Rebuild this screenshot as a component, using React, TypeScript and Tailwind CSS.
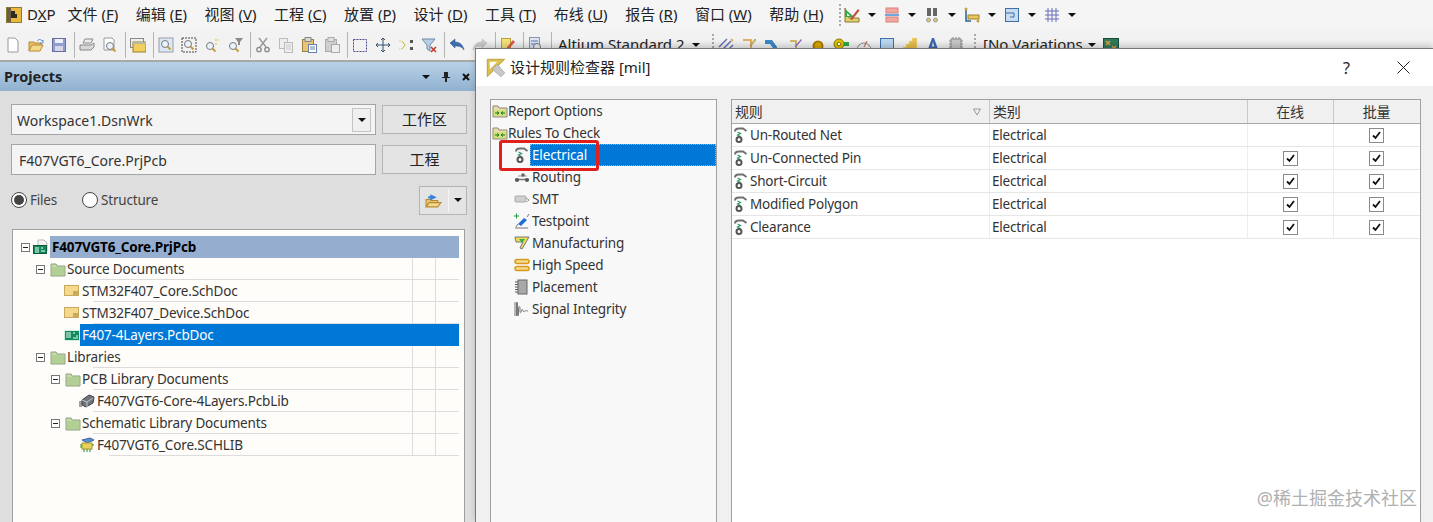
import { FC, ReactNode } from "react";

const Svg: FC<{ children: ReactNode; className?: string; size?: number }> = ({
  children,
  className,
  size = 16,
}) => (
  <svg width={size} height={size} viewBox="0 0 16 16" fill="none" className={`shrink-0 ${className ?? ""}`}>
    {children}
  </svg>
);

const Arrow = () => (
  <svg width="8" height="4" viewBox="0 0 8 4" className="shrink-0">
    <path d="M0 0h8L4 4z" fill="#111" />
  </svg>
);

const Logo = () => (
  <Svg>
    <rect x="0.5" y="0.5" width="15" height="15" fill="#e8b93c" stroke="#8a7a3a" />
    <rect x="1" y="1" width="4" height="14" fill="#6b5f40" />
    <path d="M5 4h4v3h2v4H5z" fill="#2f2a22" />
  </Svg>
);

const FolderGreen = () => (
  <Svg>
    <path d="M1 5V3h5l1 2h8v10H1z" fill="#c4dca8" stroke="#8e9f7e" />
    <rect x="2" y="6" width="12" height="8" fill="#b2d096" />
  </Svg>
);

const SchDoc = () => (
  <Svg>
    <rect x="0.5" y="2.5" width="14" height="10" fill="#f5d98a" stroke="#c9a862" />
    <path d="M9 9h5M9 11h5" stroke="#a07d2c" />
  </Svg>
);

const PcbIcon: FC<{ light?: boolean }> = ({ light }) => (
  <Svg>
    <rect x="0.5" y="3.5" width="15" height="10" fill="#128a5a" stroke={light ? "#d6f0e4" : "#0a5a3a"} />
    <path d="M2 6h5M2 8h5M2 10h5M9 6h2M12 9h2M9 11h5" stroke="#e8fff2" />
  </Svg>
);

const ProjectIcon = () => (
  <Svg>
    <path d="M5 1h6l3 3v8H5z" fill="#f4f4f4" stroke="#b8b8b8" />
    <rect x="0.5" y="6.5" width="13" height="8" fill="#128a5a" stroke="#0a5a3a" />
    <path d="M2 9h4M2 11h4M2 13h4M8 9h2M8 12h4" stroke="#e8fff2" />
  </Svg>
);

const ChipLib = () => (
  <Svg>
    <path d="M3 7l7-5 5 2-1 6-7 4-4-2z" fill="#70757c" stroke="#3d4046" />
    <path d="M3 7l5 2v5M8 9l6-4" stroke="#c0c4ca" />
    <path d="M0 9h3M0 11h3M0 13h3" stroke="#444" />
  </Svg>
);

const SchLib = () => (
  <Svg>
    <path d="M3 3l8-2 4 2-7 3z" fill="#5b8fd0" stroke="#3b67a0" />
    <rect x="3" y="6" width="10" height="6" fill="#e8d25a" stroke="#a89430" />
    <path d="M1 8h2M1 10h2M13 8h2M5 12v3M8 12v3M11 12v3" stroke="#2a8a2a" />
  </Svg>
);

const GroupFolder = () => (
  <Svg>
    <path d="M1 5V3h5l1 2h8v9H1z" fill="#e8dcae" stroke="#8f8a70" />
    <rect x="2" y="7" width="12" height="6" fill="#cfe27c" />
    <path d="M3 10h4M5 8.500L7 10l-2 1.500M13 10H9M11 8.500L9 10l2 1.500" stroke="#1d7a1d" />
  </Svg>
);

const RuleIcon = () => (
  <Svg>
    <path d="M2 4.500C2 2.500 3.500 1.500 6 1.500h4l3.500 2.500" stroke="#6f6f6f" strokeWidth="2" />
    <path d="M4.500 5l3 1.500-3 1.500 3 1.500" stroke="#2f9a6a" strokeWidth="1.200" />
    <circle cx="6" cy="12.500" r="2.500" fill="#fff" stroke="#555" strokeWidth="2" />
  </Svg>
);

const RoutingIcon = () => (
  <Svg>
    <path d="M1 10.500h14" stroke="#777" strokeWidth="1.500" />
    <path d="M4 7h9" stroke="#999" />
    <circle cx="3" cy="11" r="2" fill="#555" />
    <circle cx="13" cy="11" r="2" fill="#555" />
    <circle cx="9" cy="6" r="1.800" fill="#666" />
  </Svg>
);

const SmtIcon = () => (
  <Svg>
    <rect x="1" y="5" width="11" height="6" rx="1" fill="#cfcfcf" stroke="#aaa" />
    <path d="M12 7l3 2-2 2" stroke="#999" />
  </Svg>
);

const TestpointIcon = () => (
  <Svg>
    <path d="M0 3h5M2.500 0.500v5" stroke="#1c9a3a" />
    <path d="M4 11l6-6 3 2-6 6z" fill="#1e6fd0" />
    <path d="M13 4l2-3M1 15h13M4 11l-2 3" stroke="#777" />
  </Svg>
);

const MfgIcon = () => (
  <Svg>
    <path d="M1 2h14L8 14l-2-1 3-6H2z" fill="#f1da54" stroke="#777" />
    <path d="M5 4h6L8 8z" fill="#2fb35a" />
  </Svg>
);

const SpeedIcon = () => (
  <Svg>
    <rect x="1" y="2.500" width="14" height="4" rx="2" fill="#f5d98a" stroke="#d69a1c" strokeWidth="1.500" />
    <rect x="1" y="9.500" width="14" height="4" rx="2" fill="#f5d98a" stroke="#d69a1c" strokeWidth="1.500" />
  </Svg>
);

const PlaceIcon = () => (
  <Svg>
    <rect x="4" y="1" width="9" height="14" fill="#a8a8a8" stroke="#666" />
    <path d="M1 3h3M1 5.500h3M1 8h3M1 10.500h3M1 13h3" stroke="#555" />
  </Svg>
);

const SignalIcon = () => (
  <Svg>
    <path d="M1 15V1M2.500 15V2c0-1 1-1 1 0v12c0 1 1 1 1 0V7c0-2 1.500-2 1.500 0v4c0 1 1 1 1.500-1s1-2 1.500-.5 1 1.500 2 .5 2 0 3 0" stroke="#777" />
  </Svg>
);

const Magnifier = ({ cx = 9, cy = 8 }: { cx?: number; cy?: number }) => (
  <>
    <circle cx={cx} cy={cy} r="3.500" fill="#eaf3fb" stroke="#777" />
    <path d={`M${cx + 2.5} ${cy + 2.5}l3 3`} stroke="#c79a3c" strokeWidth="2" />
  </>
);

const tools: Record<string, ReactNode> = {
  newDoc: <path d="M3 1h7l3 3v11H3z" fill="#fff" stroke="#9a9a9a" />,
  open: (
    <>
      <path d="M1 14V5h5l1 1h6v2" fill="#e9c26a" stroke="#b58a32" />
      <path d="M1 14l3-6h11l-3 6z" fill="#f5d98a" stroke="#b58a32" />
      <path d="M9 4c2-2 4-2 5 0l1-1v3h-3" stroke="#5a8fd0" />
    </>
  ),
  save: (
    <>
      <rect x="1.500" y="1.500" width="13" height="13" fill="#8f9fd0" stroke="#6a6f9a" />
      <rect x="4" y="2" width="8" height="4" fill="#eef" />
      <rect x="4" y="9" width="8" height="5" fill="#d6d6e6" />
    </>
  ),
  print: (
    <>
      <path d="M4 6l2-4h8l-2 4z" fill="#eee" stroke="#888" />
      <path d="M1 8h11l3-2v4l-3 3H1z" fill="#d8d8d8" stroke="#888" />
    </>
  ),
  preview: (
    <>
      <path d="M2 1h8l2 2v10H2z" fill="#fff" stroke="#999" />
      <Magnifier cx={8} cy={9} />
    </>
  ),
  windowY: (
    <>
      <rect x="0.500" y="1.500" width="13" height="9" fill="#eee" stroke="#888" />
      <rect x="3" y="5" width="13" height="10" fill="#f2cf5c" stroke="#9a8030" />
      <rect x="3" y="5" width="13" height="2" fill="#b8b8a0" />
    </>
  ),
  zoomDoc: (
    <>
      <rect x="1" y="1" width="14" height="14" fill="#dbe8f5" stroke="#9a9aa6" />
      <Magnifier cx={7} cy={7} />
    </>
  ),
  zoomArea: (
    <>
      <rect x="1" y="1" width="14" height="14" stroke="#444" strokeDasharray="2 1" />
      <Magnifier cx={7} cy={7} />
    </>
  ),
  zoomSel: (
    <>
      <Magnifier cx={6} cy={9} />
      <path d="M11 3h4M11 7h3" stroke="#c7c04c" strokeDasharray="2 1" />
    </>
  ),
  zoomFilter: (
    <>
      <Magnifier cx={6} cy={9} />
      <path d="M8 1h8l-3 4v3h-2V5z" fill="#8a8a8a" />
    </>
  ),
  cut: (
    <>
      <path d="M4 1l7 9M12 1L5 10" stroke="#999" strokeWidth="1.400" />
      <circle cx="4" cy="12.500" r="2.200" stroke="#888" strokeWidth="1.300" />
      <circle cx="12" cy="12.500" r="2.200" stroke="#888" strokeWidth="1.300" />
    </>
  ),
  copy: (
    <>
      <rect x="1.500" y="1.500" width="8" height="10" fill="#eee" stroke="#bbb" />
      <rect x="6.500" y="5.500" width="8" height="10" fill="#eee" stroke="#bbb" />
      <path d="M8 8h5M8 10h5M8 12h5" stroke="#ccc" />
    </>
  ),
  paste: (
    <>
      <rect x="1.500" y="2.500" width="11" height="12" fill="#e7c574" stroke="#9a8040" />
      <rect x="4" y="0.500" width="6" height="4" fill="#d8d8d8" stroke="#888" />
      <rect x="7.500" y="7.500" width="8" height="8" fill="#fff" stroke="#6a7fb0" />
      <path d="M9 10h5M9 12h5" stroke="#6a7fb0" />
    </>
  ),
  pasteGray: (
    <>
      <rect x="1.500" y="2.500" width="11" height="12" fill="#cfcfcf" stroke="#aaa" />
      <rect x="4" y="0.500" width="6" height="4" fill="#e2e2e2" stroke="#aaa" />
      <rect x="7.500" y="7.500" width="8" height="8" fill="#eee" stroke="#aaa" />
    </>
  ),
  select: <rect x="1.500" y="2.500" width="13" height="12" stroke="#4a4a8a" strokeDasharray="2 1" />,
  move: (
    <path d="M8 1v14M1 8h14M8 1L6 3M8 1l2 2M8 15l-2-2M8 15l2-2M1 8l2-2M1 8l2 2M15 8l-2-2M15 8l-2 2" stroke="#33506e" />
  ),
  dragSel: (
    <>
      <path d="M1 4h3l3 4-3 4H1" stroke="#d8cf6a" strokeDasharray="2 1" />
      <path d="M7 8l-3-4M7 8l-3 4" stroke="#c7c04c" />
      <rect x="12" y="3" width="3" height="3" fill="#555" />
      <rect x="12" y="10" width="3" height="3" fill="#555" />
    </>
  ),
  filterX: (
    <>
      <path d="M1 2h13L9 8v6l-3-2V8z" fill="#b7cfe6" stroke="#6e8aa8" />
      <path d="M10 10l5 5M15 10l-5 5" stroke="#c0392b" strokeWidth="1.600" />
    </>
  ),
  undo: <path d="M1 6l5-4v3c5 0 8 3 9 8-2-3-4-4-9-4v2z" fill="#3d6fb0" stroke="#2a4f88" strokeWidth="0.500" />,
  redo: <path d="M15 6l-5-4v3c-5 0-8 3-9 8 2-3 4-4 9-4v2z" fill="#ccc" stroke="#bbb" strokeWidth="0.500" />,
  pencil: (
    <>
      <rect x="1.500" y="1.500" width="9" height="13" fill="#f6e27a" stroke="#b8a040" />
      <path d="M4 14l9-11 2 2-9 10z" fill="#e0584c" />
    </>
  ),
  docBlue: (
    <>
      <rect x="1.500" y="0.500" width="10" height="14" fill="#dfe6f3" stroke="#8a94b0" />
      <path d="M3 4h7M3 7h7" stroke="#5a78b0" />
      <Magnifier cx={9} cy={10} />
    </>
  ),
  hatch: (
    <>
      <path d="M1 10l8-8M4 13l9-9M8 15l7-7" stroke="#6a6fb8" strokeWidth="1.500" />
      <path d="M13 2l2 2" stroke="#e0b84c" strokeWidth="2" />
    </>
  ),
  corner: (
    <>
      <path d="M2 3h8v11" stroke="#e09a3c" strokeWidth="1.500" />
      <path d="M9 8l5-6 1 1-5 6z" fill="#f0d060" stroke="#8a7030" strokeWidth="0.500" />
    </>
  ),
  track: <path d="M1 3h7l5 7v5H9v-4L6 7H1z" fill="#3d87c8" />,
  corner2: (
    <>
      <path d="M3 4h6v11" stroke="#c9a03c" strokeWidth="1.500" />
      <path d="M8 9l6-7 1 1-6 7z" fill="#8a6fc0" />
    </>
  ),
  pad: <circle cx="8" cy="9" r="4.500" fill="#e0a800" stroke="#a87a00" strokeWidth="2" />,
  via: (
    <>
      <circle cx="6" cy="7" r="5" fill="#e0c400" stroke="#8a7a00" />
      <circle cx="6" cy="7" r="1.800" fill="#fff" stroke="#8a7a00" />
      <rect x="11" y="5" width="5" height="4" fill="#2fa84a" />
    </>
  ),
  arc: (
    <>
      <path d="M1 13a7 7 0 0 1 14 0" stroke="#888" />
      <path d="M8 10l3-6" stroke="#c0503c" />
    </>
  ),
  fill: <rect x="1.500" y="1.500" width="13" height="13" fill="#bcd9f2" stroke="#3d6fa8" />,
  poly: (
    <path d="M1 15V10h3V7h3V4h3V1h5v14z" fill="#e9c04c" stroke="#f5e4a0" strokeDasharray="1.500 1" />
  ),
  letter: <path d="M2 15L7 1h2l5 14h-3l-1-3H6l-1 3zM6.800 9.500h2.400L8 5z" fill="#3f66b0" />,
  chip: (
    <>
      <rect x="3" y="2" width="10" height="12" fill="#c8c8c8" stroke="#888" />
      <path d="M1 4h2M1 7h2M1 10h2M13 4h2M13 7h2M13 10h2M5 0v2M8 0v2M11 0v2" stroke="#888" />
    </>
  ),
  board: (
    <>
      <rect x="0.500" y="1.500" width="15" height="13" fill="#2f7a5a" stroke="#1c4a38" />
      <path d="M3 4l4 4M7 4L3 8M9 9l4 4M13 9l-4 4" stroke="#e0a040" strokeWidth="1.500" />
    </>
  ),
  drc: (
    <>
      <path d="M1 1v14h14v-4H5z" fill="#e0cf6a" stroke="#8a7a30" />
      <path d="M1 2l9 8H1z" fill="#2fa84a" />
      <path d="M3 6v3h3z" fill="#f5f5f5" />
      <path d="M6 12L14 2l1.500 1.500L8 13z" fill="#c0503c" />
    </>
  ),
  align: (
    <>
      <rect x="2" y="1" width="12" height="5" fill="#f2a8a0" stroke="#d98078" />
      <rect x="2" y="10" width="12" height="5" fill="#f2a8a0" stroke="#d98078" />
      <path d="M1 8h14" stroke="#6fa8dc" strokeWidth="2" />
    </>
  ),
  bino: (
    <>
      <rect x="3" y="1" width="4" height="8" fill="#666" />
      <rect x="9" y="1" width="4" height="8" fill="#666" />
      <circle cx="4.500" cy="13" r="2" fill="#d9c97a" stroke="#999" />
      <circle cx="11.500" cy="13" r="2" fill="#d9c97a" stroke="#999" />
    </>
  ),
  ruler: (
    <>
      <path d="M2 1v13h5" stroke="#2a5f9a" strokeWidth="1.500" />
      <rect x="4" y="8" width="11" height="4" fill="#e8c65c" stroke="#a08430" />
      <circle cx="2" cy="2" r="1.500" fill="#c9a03c" />
      <circle cx="14" cy="14" r="1.500" fill="#c9a03c" />
    </>
  ),
  snap: (
    <>
      <rect x="1.500" y="1.500" width="13" height="13" fill="#c8dcf0" stroke="#3d6fa8" />
      <path d="M2 6h8v4H6" stroke="#3d6fa8" />
    </>
  ),
  grid: <path d="M1 4h14M1 8h14M1 12h14M4 1v14M8 1v14M12 1v14" stroke="#6a6fb8" />,
};

const Tool: FC<{ name: string }> = ({ name }) => (
  <div className="flex w-[23px] shrink-0 items-center justify-center">
    <Svg>{tools[name]}</Svg>
  </div>
);

const Sep = () => (
  <div className="flex w-[5px] shrink-0 items-stretch justify-end">
    <div className="my-[2px] h-[26px] w-px bg-[#b4b4b4]" />
  </div>
);

const Grip = () => <div className="h-[22px] w-[2px] shrink-0 border-l-2 border-dotted border-[#a8a8a8]" />;

const menu: [string, string][] = [
  ["文件", "F"],
  ["编辑", "E"],
  ["视图", "V"],
  ["工程", "C"],
  ["放置", "P"],
  ["设计", "D"],
  ["工具", "T"],
  ["布线", "U"],
  ["报告", "R"],
  ["窗口", "W"],
  ["帮助", "H"],
];

const MenuBar = () => (
  <div className="flex h-[29px] items-center bg-[#f5f5f5] pl-[6px] text-[15px] leading-none">
    <Logo />
    <span className="ml-[5px] mr-[12px]">
      D<span className="underline">X</span>P
    </span>
    <div className="flex w-[756px] shrink-0 items-center justify-between">
      {menu.map(([label, key]) => (
        <span key={label} className="whitespace-nowrap">
          {label} (<span className="underline">{key}</span>)
        </span>
      ))}
    </div>
    <div className="ml-[15px] flex items-center">
      <Grip />
      {["drc", "align", "bino", "ruler", "snap", "grid"].map(name => (
        <div key={name} className="flex items-center">
          <Tool name={name} />
          <div className="flex w-[17px] justify-center">
            <Arrow />
          </div>
        </div>
      ))}
    </div>
  </div>
);

const row2: string[] = [
  "newDoc", "open", "save", "|",
  "print", "preview", "|",
  "windowY", "|",
  "zoomDoc", "zoomArea", "zoomSel", "zoomFilter", "|",
  "cut", "copy", "paste", "pasteGray", "|",
  "select", "move", "dragSel", "filterX", "|",
  "undo", "redo", "|",
  "pencil", "|",
  "docBlue", "|",
];

const row2b = ["hatch", "corner", "track", "corner2", "pad", "via", "arc", "fill", "poly", "letter", "chip"];

const ToolBar = () => (
  <div className="flex h-[31px] items-center bg-[#f2f2f2] pl-px text-[15px] leading-none">
    {row2.map((name, i) => (name === "|" ? <Sep key={i} /> : <Tool key={i} name={name} />))}
    <div className="ml-[6px] flex w-[154px] shrink-0 items-center">
      <span className="whitespace-nowrap">Altium Standard 2</span>
      <span className="ml-[7px]">
        <Arrow />
      </span>
    </div>
    <Grip />
    {row2b.map(name => (
      <Tool key={name} name={name} />
    ))}
    <div className="ml-[7px]">
      <Grip />
    </div>
    <span className="ml-[7px] whitespace-nowrap">[No Variations</span>
    <span className="ml-[5px]">
      <Arrow />
    </span>
    <div className="ml-[4px]">
      <Tool name="board" />
    </div>
  </div>
);

const Expander = () => (
  <span className="flex h-[9px] w-[9px] shrink-0 items-center justify-center border border-[#777] bg-white">
    <span className="h-px w-[5px] bg-[#222]" />
  </span>
);

type TreeRow = {
  label: string;
  icon: ReactNode;
  pad: string;
  line: string;
  expander?: boolean;
  selected?: boolean;
};

const treeRows: TreeRow[] = [
  { label: "Source Documents", icon: <FolderGreen />, pad: "w-[67px] pl-[36px]", line: "ml-[80px]", expander: true },
  { label: "STM32F407_Core.SchDoc", icon: <SchDoc />, pad: "w-[82px] pl-[64px]", line: "ml-[80px]" },
  { label: "STM32F407_Device.SchDoc", icon: <SchDoc />, pad: "w-[82px] pl-[64px]", line: "ml-[80px]" },
  { label: "F407-4Layers.PcbDoc", icon: <PcbIcon light />, pad: "w-[82px] pl-[64px]", line: "ml-[80px]", selected: true },
  { label: "Libraries", icon: <FolderGreen />, pad: "w-[67px] pl-[36px]", line: "ml-[80px]", expander: true },
  { label: "PCB Library Documents", icon: <FolderGreen />, pad: "w-[82px] pl-[51px]", line: "ml-[80px]", expander: true },
  { label: "F407VGT6-Core-4Layers.PcbLib", icon: <ChipLib />, pad: "w-[97px] pl-[79px]", line: "ml-[80px]" },
  { label: "Schematic Library Documents", icon: <FolderGreen />, pad: "w-[82px] pl-[51px]", line: "ml-[80px]", expander: true },
  { label: "F407VGT6_Core.SCHLIB", icon: <SchLib />, pad: "w-[97px] pl-[79px]", line: "ml-[96px]" },
];

const ProjectTree = () => (
  <div className="ml-[12px] w-[453px] overflow-hidden border-x border-t border-[#a0a0a0] bg-[#fefdfa] pt-[6px] text-[13.5px] tracking-[-0.15px]">
    <div className="flex h-[22px] items-center">
      <div className="flex w-[37px] shrink-0 items-center pl-[8px]">
        <Expander />
        <span className="ml-[3px]">
          <ProjectIcon />
        </span>
      </div>
      <div className="flex h-[22px] w-[409px] items-center bg-[#95aed0] pl-[2px] font-bold text-black">
        F407VGT6_Core.PrjPcb
      </div>
    </div>
    {treeRows.map(row => (
      <div key={row.label} className="relative flex h-[22px] w-[446px] items-center">
        <div className={`-ml-[13px] flex shrink-0 items-center gap-[5px] ${row.pad}`}>
          {row.expander && <Expander />}
          {row.icon}
        </div>
        <div
          className={`flex h-[22px] flex-1 items-center whitespace-nowrap ${
            row.selected ? "-ml-[2px] bg-[#0078d7] pl-[2px] text-white" : "text-[#333]"
          }`}
        >
          {row.label}
        </div>
        {!row.selected && (
          <>
            <div className="absolute right-[46px] top-0 h-[22px] w-px bg-[#dcdcdc]" />
            <div className="absolute right-[23px] top-0 h-[22px] w-px bg-[#dcdcdc]" />
            <div className={`absolute bottom-0 left-0 right-0 h-px bg-[#dcdcdc] ${row.line}`} />
          </>
        )}
      </div>
    ))}
  </div>
);

const LeftPanel = () => (
  <div className="flex w-[476px] flex-1 flex-col overflow-hidden border-t-[2px] border-[#a8a8a8] bg-[#dedede]">
    <div className="flex h-[29px] shrink-0 items-center bg-gradient-to-b from-[#b9d1e7] to-[#90b1d0] pl-[4px] pr-[6px]">
      <span className="text-[14.5px] font-bold text-[#222]">Projects</span>
      <div className="ml-auto flex items-center gap-[12px]">
        <Arrow />
        <svg width="8" height="10" viewBox="0 0 8 10" className="shrink-0">
          <path d="M2 0h4v5h2v1H5v4H3V6H0V5h2z" fill="#222" />
        </svg>
        <svg width="8" height="8" viewBox="0 0 8 8" className="shrink-0">
          <path d="M1 1l6 6M7 1L1 7" stroke="#111" strokeWidth="2" />
        </svg>
      </div>
    </div>
    <div className="flex flex-col gap-[9px] pl-[11px] pr-[9px] pt-[13px]">
      <div className="flex gap-[6px]">
        <div className="flex h-[31px] w-[365px] shrink-0 items-center justify-between border border-[#a5a5a5] bg-[#f4f4f4] pl-[5px] pr-[4px] text-[14px] text-[#333]">
          <span className="pt-[2px]">Workspace1.DsnWrk</span>
          <span className="flex h-[24px] w-[19px] items-center justify-center border border-[#c4c4c4] bg-[#f0f0f0]">
            <Arrow />
          </span>
        </div>
        <button className="my-px h-[29px] w-[85px] shrink-0 border border-[#b4b4b4] bg-[#e4e4e4] text-[15px] text-[#222]">
          工作区
        </button>
      </div>
      <div className="flex gap-[6px]">
        <div className="flex h-[31px] w-[365px] shrink-0 items-center border border-[#a5a5a5] bg-[#f4f4f4] pl-[7px] pt-[2px] text-[14px] text-[#333]">
          F407VGT6_Core.PrjPcb
        </div>
        <button className="my-px h-[29px] w-[85px] shrink-0 border border-[#b4b4b4] bg-[#e4e4e4] text-[15px] text-[#222]">
          工程
        </button>
      </div>
    </div>
    <div className="mt-[5px] flex h-[40px] items-center pl-[11px] pr-[9px] text-[13.5px] tracking-[-0.2px] text-[#444]">
      <span className="flex h-[16px] w-[16px] items-center justify-center rounded-full border border-[#444] bg-white">
        <span className="h-[10px] w-[10px] rounded-full bg-[#444]" />
      </span>
      <span className="ml-[3px]">Files</span>
      <span className="ml-[25px] h-[16px] w-[16px] rounded-full border border-[#444] bg-white" />
      <span className="ml-[3px]">Structure</span>
      <div className="ml-auto flex h-[29px] w-[48px] items-center border border-[#b4b4b4] bg-[#e4e4e4] pl-[5px]">
        <Svg size={17}>
          <path d="M1 14V7h4l1 1h6v2" fill="#e9c26a" stroke="#b58a32" />
          <path d="M1 14l3-4h11l-3 4z" fill="#f5d98a" stroke="#b58a32" />
          <path d="M5 2l6 3-6 3zM3 4h3v2H3z" fill="#3a82d8" />
        </Svg>
        <span className="ml-[6px] h-[23px] w-px bg-[#f6f6f6]" />
        <span className="ml-[5px]">
          <Arrow />
        </span>
      </div>
    </div>
    <div className="mt-[9px] flex flex-1 overflow-hidden">
      <ProjectTree />
    </div>
  </div>
);

const ruleTree: { label: string; icon: ReactNode; selected?: boolean }[] = [
  { label: "Electrical", icon: <RuleIcon />, selected: true },
  { label: "Routing", icon: <RoutingIcon /> },
  { label: "SMT", icon: <SmtIcon /> },
  { label: "Testpoint", icon: <TestpointIcon /> },
  { label: "Manufacturing", icon: <MfgIcon /> },
  { label: "High Speed", icon: <SpeedIcon /> },
  { label: "Placement", icon: <PlaceIcon /> },
  { label: "Signal Integrity", icon: <SignalIcon /> },
];

const RuleTree = () => (
  <div className="-mb-px w-[227px] shrink-0 border border-[#a0a0a0] bg-[#f8f8f8] text-[13.5px] tracking-[-0.15px] text-[#333]">
    {["Report Options", "Rules To Check"].map(label => (
      <div key={label} className="flex h-[22px] items-center pl-px">
        <GroupFolder />
        {label}
      </div>
    ))}
    {ruleTree.map(item => (
      <div key={item.label} className="flex h-[22px] items-center pl-[23px]">
        {item.icon}
        <span
          className={`flex h-[22px] items-center pl-[2px] ${
            item.selected ? "flex-1 bg-[#0078d7] text-white outline outline-1 -outline-offset-1 outline-dotted outline-[#7fb4e6]" : ""
          }`}
        >
          {item.label}
        </span>
      </div>
    ))}
  </div>
);

const Check: FC<{ on?: boolean }> = ({ on = true }) =>
  on ? (
    <span className="flex h-[15px] w-[15px] items-center justify-center border border-[#8a8a8a] bg-white">
      <svg width="9" height="9" viewBox="0 0 9 9">
        <path d="M1 4.500l2.500 2.500L8 1" stroke="#111" strokeWidth="1.800" fill="none" />
      </svg>
    </span>
  ) : null;

const rules = [
  { name: "Un-Routed Net", online: false },
  { name: "Un-Connected Pin", online: true },
  { name: "Short-Circuit", online: true },
  { name: "Modified Polygon", online: true },
  { name: "Clearance", online: true },
];

const RuleTable = () => (
  <div className="-mb-px w-[690px] shrink-0 border border-[#a0a0a0] bg-white text-[13.5px] tracking-[-0.2px] text-[#333]">
    <div className="grid h-[24px] grid-cols-[258px_258px_86px_86px] border-b border-[#a8a8a8] bg-[#f0f0f0] text-[14px]">
      <div className="flex items-center justify-between border-r border-[#c8c8c8] pl-[3px] pr-[8px]">
        规则
        <svg width="8" height="8" viewBox="0 0 8 8">
          <path d="M0.500 1h7L4 7z" fill="none" stroke="#999" />
        </svg>
      </div>
      <div className="flex items-center border-r border-[#c8c8c8] pl-[3px]">类别</div>
      <div className="flex items-center justify-center border-r border-[#c8c8c8] pr-[1px]">在线</div>
      <div className="flex items-center justify-center pr-[1px]">批量</div>
    </div>
    {rules.map(rule => (
      <div
        key={rule.name}
        className="grid h-[23px] grid-cols-[258px_258px_86px_86px] border-b border-[#e6e6e6]"
      >
        <div className="flex items-center gap-px border-r border-[#eeeeee] pl-px">
          <RuleIcon />
          {rule.name}
        </div>
        <div className="flex items-center border-r border-[#eeeeee] pl-[2px]">Electrical</div>
        <div className="flex items-center justify-center border-r border-[#eeeeee] pr-[1px]">
          <Check on={rule.online} />
        </div>
        <div className="flex items-center justify-center pr-[1px]">
          <Check />
        </div>
      </div>
    ))}
  </div>
);

const Dialog = () => (
  <div className="absolute bottom-0 left-[475px] right-0 top-[48px] flex flex-col border-l border-t border-[#777] bg-[#f0f0f0] shadow-[0_-3px_6px_rgba(0,0,0,0.18)]">
    <div className="flex h-[37px] shrink-0 items-center bg-white pl-[10px] pr-[23px]">
      <Svg size={20}>
        <path d="M1 1h14L1 15z" fill="#dcc04a" stroke="#a89030" strokeWidth="0.600" />
        <path d="M3 3h6L3 9z" fill="#fff" />
        <path d="M9 5l6 7-3 3-7-6z" fill="#c8c8c8" stroke="#999" strokeWidth="0.500" />
      </Svg>
      <span className="ml-[4px] text-[15px] text-[#222]">设计规则检查器 [mil]</span>
      <span className="ml-auto text-[16px] text-[#222]">?</span>
      <svg width="13" height="13" viewBox="0 0 13 13" className="ml-[47px]">
        <path d="M0.500 0.500l12 12M12.500 0.500l-12 12" stroke="#222" />
      </svg>
    </div>
    <div className="flex flex-1 gap-[14px] pl-[14px] pt-[13px]">
      <RuleTree />
      <RuleTable />
    </div>
  </div>
);

export default function App() {
  return (
    <div className="relative flex h-[522px] w-[1433px] flex-col overflow-hidden bg-[#f2f2f2] font-['Noto_Sans','Noto_Sans_CJK_SC',sans-serif] text-[#222]">
      <MenuBar />
      <ToolBar />
      <LeftPanel />
      <Dialog />
      <div className="absolute left-[499px] top-[140px] h-[31px] w-[100px] rounded-[3px] border-[3px] border-[#e0201c]" />
      <div className="absolute bottom-[15px] right-[16px] text-[18px] leading-none text-[#b0b0b0]">@稀土掘金技术社区</div>
    </div>
  );
}
